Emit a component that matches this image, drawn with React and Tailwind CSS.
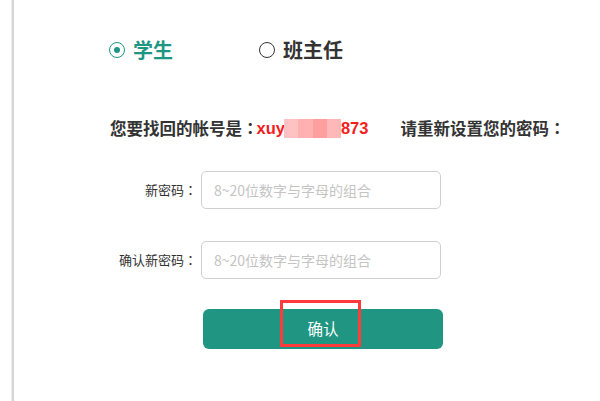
import React from "react";

const font = { fontFamily: '"Noto Sans CJK SC", "Noto Sans", sans-serif' };
const colon = { fontFamily: '"Noto Sans CJK JP", "Noto Sans CJK SC", sans-serif' };
const latin = { fontFamily: '"Liberation Sans", "Noto Sans", sans-serif' };

function Field({ label, mt }) {
  return (
    <div className={`flex items-center ${mt}`}>
      <div className="w-[87px] text-right text-[13px] text-[#333] leading-[38px] whitespace-nowrap">
        {label}
        <span style={colon}>：</span>
      </div>
      <div className="ml-[4px] w-[240px] h-[38px] border border-[#d0d0d0] rounded-[5px] flex items-center pl-[12px] text-[14px] text-[#c4c4c4]">
        8~20位数字与字母的组合
      </div>
    </div>
  );
}

export default function App() {
  return (
    <div className="flex min-h-[401px] w-[600px] bg-white" style={font}>
      <div className="w-[11px] shrink-0" />
      <div className="w-[1px] shrink-0 bg-[#ececec]" />
      <div className="w-[2px] shrink-0 bg-[#d6d6d6]" />
      <div className="flex-1 pl-[96px] pt-[36px]">
        <div className="flex items-center h-[28px]">
          <span className="-ml-[1px] w-[16px] h-[16px] rounded-full border-[1.5px] border-[#1e9683] flex items-center justify-center">
            <span className="w-[6px] h-[6px] rounded-full bg-[#1e9683]" />
          </span>
          <span className="ml-[8px] text-[20px] font-bold text-[#1e9683]">学生</span>
          <span className="ml-[86px] w-[16px] h-[16px] rounded-full border-[1.5px] border-[#333]" />
          <span className="ml-[8px] text-[20px] font-bold text-[#333]">班主任</span>
        </div>
        <div className="mt-[52px] flex items-center h-[24px] text-[16.5px] font-bold text-[#333] whitespace-nowrap">
          <span>您要找回的帐号是</span>
          <span style={colon} className="-mr-[2px]">：</span>
          <span className="text-[#f51c1c]" style={latin}>xuy</span>
          <span className="inline-flex h-[19px] w-[57px] -ml-[1px]">
            <span className="w-[14px] bg-[#ffc2c2]" />
            <span className="w-[15px] bg-[#ffb0b0]" />
            <span className="w-[14px] bg-[#ff9e9e]" />
            <span className="w-[14px] bg-[#ffb8b8]" />
          </span>
          <span className="text-[#f51c1c]" style={latin}>873</span>
          <span className="ml-[32px]">请重新设置您的密码</span>
          <span style={colon}>：</span>
        </div>
        <Field label="新密码" mt="mt-[31px]" />
        <Field label="确认新密码" mt="mt-[32px]" />
        <div className="mt-[30px] ml-[93px] relative w-[240px] h-[40px] rounded-[6px] bg-[#1f9582] flex items-center justify-center text-white text-[15.5px]">
          确认
          <div className="absolute left-[77px] top-[-9px] w-[81px] h-[47px] border-[3px] border-[#ff3b3b]" />
        </div>
      </div>
    </div>
  );
}
